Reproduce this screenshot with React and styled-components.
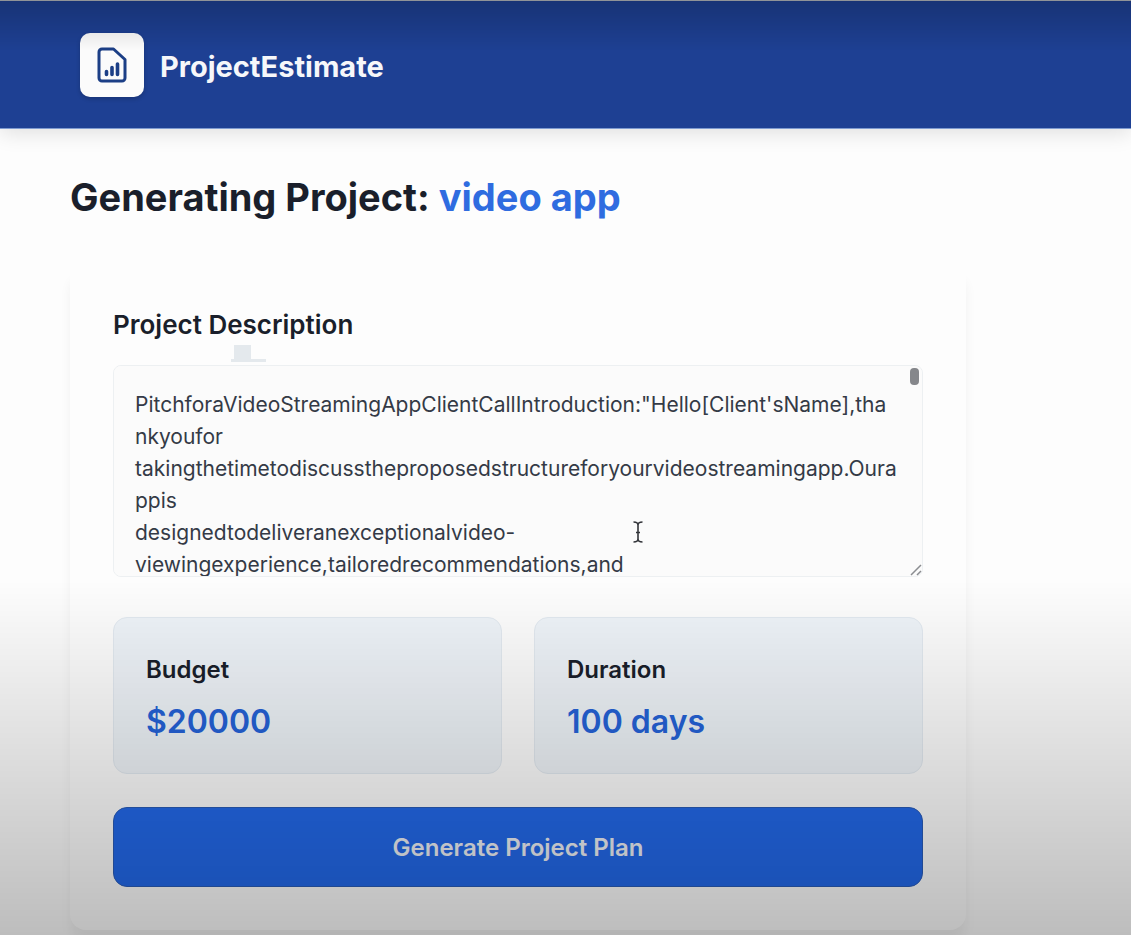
import React, { useState } from 'react';
import styled, { createGlobalStyle } from 'styled-components';

const GlobalStyle = createGlobalStyle`
  *,
  *::before,
  *::after {
    box-sizing: border-box;
  }
  body {
    margin: 0;
    background: #fdfdfd;
    color: #1a1f2b;
    font-family: Inter, 'Liberation Sans', sans-serif;
    overflow: hidden;
  }
`;

const Page = styled.div`
  min-height: 100vh;
`;

const Header = styled.header`
  display: flex;
  align-items: center;
  gap: 16px;
  height: 129px;
  padding: 0 80px;
  background: #1e4093;
  border-top: 1px solid #b4b7bd;
  border-bottom: 1px solid #7f9bd0;
  box-shadow: 0 4px 20px rgba(0, 0, 0, 0.12);
`;

const Logo = styled.div`
  display: flex;
  align-items: center;
  justify-content: center;
  width: 64px;
  height: 64px;
  border-radius: 10px;
  background: #fbfbfb;
  box-shadow: 0 2px 4px rgba(0, 0, 0, 0.2);
`;

const Brand = styled.span`
  padding-top: 4px;
  color: #f6f7fa;
  font-size: 29px;
  font-weight: 700;
  line-height: 40px;
`;

const Main = styled.main`
  padding: 44px 70px 0;
`;

const Title = styled.h1`
  margin: 0 0 43px;
  font-size: 38px;
  font-weight: 700;
  line-height: 48px;

  span {
    color: #2f6ce0;
  }
`;

const Card = styled.section`
  display: flex;
  flex-direction: column;
  max-width: 896px;
  padding: 43px;
  border-radius: 16px;
  background: #fdfdfd;
  box-shadow: 0 12px 12px rgba(0, 0, 0, 0.05);
`;

const Label = styled.label`
  margin-bottom: 22px;
  font-size: 26px;
  font-weight: 600;
  line-height: 36px;
`;

const Field = styled.div`
  position: relative;
  display: flex;
  margin-bottom: 40px;
`;

const Description = styled.textarea`
  flex: 1;
  height: 212px;
  padding: 23px 24px 0 21px;
  border: 1px solid #edf0f2;
  border-radius: 8px;
  outline: none;
  background: #fbfbfb;
  color: #343a46;
  font-family: inherit;
  font-size: 21px;
  line-height: 32px;
  resize: none;
  scrollbar-width: none;
`;

const Thumb = styled.span`
  position: absolute;
  top: 3px;
  right: 4px;
  width: 9px;
  height: 17px;
  border-radius: 4px;
  background: #85878b;
`;

const Grip = styled.svg`
  position: absolute;
  right: 1px;
  bottom: 1px;
`;

const Pointer = styled.svg`
  position: absolute;
  top: 155px;
  left: 519px;
  pointer-events: none;
`;

const Smudge = styled.svg`
  position: absolute;
  top: -21px;
  left: 118px;
`;

const Stats = styled.div`
  display: grid;
  grid-template-columns: 1fr 1fr;
  gap: 32px;
  margin-bottom: 33px;
`;

const Stat = styled.div`
  padding: 33px 32px 31px;
  border: 1px solid #e3eaf1;
  border-radius: 14px;
  background: #eff4f9;
`;

const StatName = styled.h2`
  margin: 0 0 12px;
  font-size: 24px;
  font-weight: 600;
  line-height: 38px;
`;

const StatValue = styled.p`
  margin: 0;
  color: #2563d8;
  font-size: 32px;
  font-weight: 600;
  line-height: 41px;
`;

const Button = styled.button`
  height: 80px;
  border: 1px solid #2a5cb8;
  border-radius: 14px;
  background: #2369ea;
  color: #eef1f6;
  font-family: inherit;
  font-size: 24px;
  font-weight: 600;
  cursor: pointer;
`;

const Shade = styled.div`
  position: fixed;
  inset: 0;
  pointer-events: none;
  background:
    linear-gradient(to bottom, rgba(0, 0, 0, 0.2), rgba(0, 0, 0, 0)) top / 100% 50px no-repeat,
    linear-gradient(to top, rgba(0, 0, 0, 0.25), rgba(0, 0, 0, 0)) bottom / 100% 355px no-repeat;
`;

const pitch = `PitchforaVideoStreamingAppClientCallIntroduction:"Hello[Client'sName],thankyoufor
takingthetimetodiscusstheproposedstructureforyourvideostreamingapp.Ourappis
designedtodeliveranexceptionalvideo-viewingexperience,tailoredrecommendations,and`;

const stats = [
  { name: 'Budget', value: '$20000' },
  { name: 'Duration', value: '100 days' },
];

const LogoIcon = () => (
  <svg width="32" height="38" viewBox="0 0 32 38" fill="none" stroke="#1c3f86" strokeLinecap="round" strokeLinejoin="round">
    <path d="M6 3h11.500L29 13.500V32a3 3 0 0 1-3 3H6a3 3 0 0 1-3-3V6a3 3 0 0 1 3-3z" strokeWidth="3" />
    <path d="M10.500 25.500v3M16 21.500v7M21.500 18v10.500" strokeWidth="3.600" />
  </svg>
);

const App = () => {
  const [description, setDescription] = useState(pitch);

  return (
    <Page>
      <GlobalStyle />
      <Header>
        <Logo>
          <LogoIcon />
        </Logo>
        <Brand>ProjectEstimate</Brand>
      </Header>
      <Main>
        <Title>
          Generating Project: <span>video app</span>
        </Title>
        <Card>
          <Label htmlFor="description">Project Description</Label>
          <Field>
            <Description
              id="description"
              spellCheck={false}
              value={description}
              onChange={(e) => setDescription(e.target.value)}
            />
            <Thumb />
            <Grip width="12" height="12" viewBox="0 0 12 12" stroke="#8b8d91" strokeWidth="1.500">
              <path d="M1 11L11 1M7 11l4-4" />
            </Grip>
            <Smudge width="36" height="18" viewBox="0 0 36 18" fill="#e4e9ed">
              <path d="M3 1h17v14h15v3H0v-3h3z" />
            </Smudge>
            <Pointer width="12" height="24" viewBox="0 0 12 24" fill="none" stroke="#33353a" strokeWidth="1.600">
              <path d="M1.500 2C4 2 6 2.500 6 5c0-2.500 2-3 4.500-3M6 5v14M1.500 22C4 22 6 21.500 6 19c0 2.500 2 3 4.500 3M4 12.500h4" />
            </Pointer>
          </Field>
          <Stats>
            {stats.map((stat) => (
              <Stat key={stat.name}>
                <StatName>{stat.name}</StatName>
                <StatValue>{stat.value}</StatValue>
              </Stat>
            ))}
          </Stats>
          <Button type="button">Generate Project Plan</Button>
        </Card>
      </Main>
      <Shade />
    </Page>
  );
};

export default App;
